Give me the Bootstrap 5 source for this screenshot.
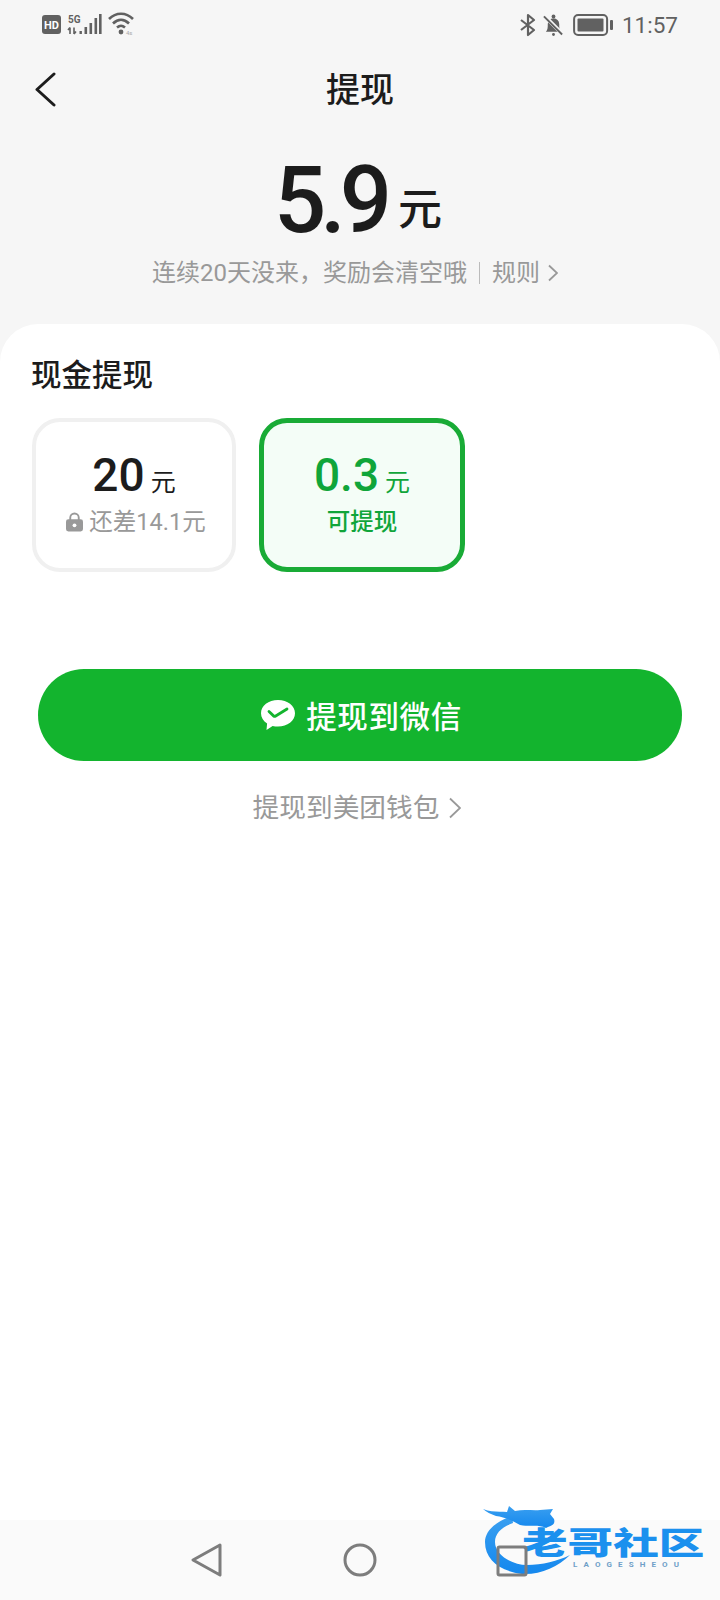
<!DOCTYPE html>
<html lang="zh-CN">
<head>
<meta charset="utf-8">
<title>提现</title>
<link href="https://cdn.jsdelivr.net/npm/bootstrap@5.3.0/dist/css/bootstrap.min.css" rel="stylesheet">
<style>
html,body{height:1600px;overflow:hidden;}
body{background:#f6f6f6;font-family:"Roboto","Noto Sans CJK SC",sans-serif;color:#1c1c1c;width:720px;position:relative;}
.screen{height:1600px;}
.statusbar{height:58px;padding:12px 42px 0 41px;color:#616161;}
.clock{font-size:22.5px;line-height:26px;font-family:"Roboto",sans-serif;margin-left:8px;}
.ic-bell{margin-left:6px;}
.ic-batt{margin-left:9px;}
.ic-wifi{margin-left:5px;}
.topbar{height:64px;position:relative;}
.topbar h1{font-size:34px;font-weight:500;margin:0;line-height:64px;width:100%;text-align:center;}
.backbtn{position:absolute;left:34px;top:14px;}
.balance{height:202px;padding-top:31px;}
.amount-line{line-height:96px;height:96px;padding-right:4px;}
.amount-big{font-size:92px;font-weight:500;letter-spacing:-6px;font-family:"Roboto",sans-serif;}
.amount-unit{font-size:44px;margin-left:12px;font-weight:500;transform:translateY(-7px);}
.rule-line{font-size:24px;color:#999;line-height:32px;margin-top:8px;padding-right:10px;}
.rule-sep{width:1px;height:22px;background:#bbb;margin:0 12px;}
.sheet{background:#fff;border-radius:38px 38px 0 0;padding:29px 32px 0 32px;}
.sheet-title{font-size:30.5px;font-weight:500;line-height:46px;margin:0 0 19px -1px;}
.tier{height:154px;border-radius:28px;padding-bottom:5px;}
.tier-off{border:4px solid #f0f0f0;background:#fff;width:204px;}
.tier-on{border:5px solid #19ab36;background:#f4fdf7;color:#10a53a;margin-left:23px;width:206px;}
.tier-val{font-size:46px;line-height:54px;font-weight:500;}
.tier-unit{font-size:25px;margin-left:6px;font-weight:400;}
.tier-note{font-size:23.5px;line-height:32px;color:#999;margin-top:4px;}
.tier-off .tier-note{padding-left:4px;}
.tier-on .tier-note{color:#10a53a;font-size:23.5px;font-weight:500;}
.lock-ic{margin-right:6px;}
.wx-btn{background:#13b42e;color:#fff;border:0;border-radius:46px;width:644px;height:92px;margin:97px 0 0 6px;padding-left:14px;font-size:30.5px;font-weight:500;letter-spacing:.6px;}
.wx-btn:hover{background:#13b42e;color:#fff;}
.wx-btn span{padding-top:5px;}
.wx-ic{margin-right:2px;}
.mt-link{font-size:26.7px;color:#999;line-height:36px;margin-top:29px;padding-right:6px;}
.chev-link{margin-left:10px;}
.navbar-bottom{position:absolute;left:0;right:0;bottom:0;height:80px;background:#fafafa;}
.nav-item-icon{position:absolute;top:22px;}
.wm{position:absolute;left:482px;top:1505px;width:225px;height:85px;}
.wm-text{position:absolute;left:40px;top:20px;font-size:31px;line-height:32px;font-weight:900;white-space:nowrap;font-family:"Noto Sans CJK SC",sans-serif;transform:scaleX(1.47);transform-origin:left center;color:#1b90ee;}
.wm-sub{position:absolute;left:91px;top:55px;font-size:8px;line-height:10px;font-weight:700;letter-spacing:6.1px;color:#6f9fc8;white-space:nowrap;}
.wm-logo{position:absolute;left:0;top:0;}
.wm-square{position:absolute;left:14px;top:40px;}
</style>
</head>
<body>
<div class="screen d-flex flex-column">
  <div class="statusbar d-flex justify-content-between align-items-start">
    <div class="d-flex align-items-center">
      <svg width="62" height="24" viewBox="0 0 62 24">
        <rect x="1" y="3" width="19" height="19" rx="3" fill="#616161"/>
        <text x="10.5" y="17" font-size="11" font-weight="700" fill="#fff" text-anchor="middle" font-family="Roboto">HD</text>
        <text x="27" y="11" font-size="10" font-weight="700" fill="#616161" font-family="Roboto">5G</text>
        <path d="M29 15.500v6.500M27 18l2-2.500M33 15.500v6.500M35 19.500l-2 2.500" stroke="#616161" stroke-width="1.600" fill="none"/>
        <g fill="#616161"><rect x="38.500" y="19" width="2.400" height="3"/><rect x="43.500" y="15" width="2.600" height="7"/><rect x="48.500" y="11" width="2.600" height="11"/><rect x="53.500" y="6" width="2.600" height="16"/><rect x="58" y="2" width="2.600" height="20"/></g>
      </svg>
      <svg class="ic-wifi" width="28" height="24" viewBox="0 0 28 24">
        <path d="M1 7C8 0 18 0 25 7M5 11.500c5-5 11-5 16 0M9 15.500c3-2.500 5-2.500 8 0" stroke="#616161" stroke-width="2.600" fill="none"/>
        <circle cx="13" cy="20" r="2.400" fill="#616161"/>
        <text x="18" y="23" font-size="6" fill="#aaa" font-family="Roboto">4s</text>
      </svg>
    </div>
    <div class="d-flex align-items-center">
      <svg width="18" height="24" viewBox="0 0 18 24"><path d="M2 7l13 10-6 5V2l6 5L2 17" stroke="#616161" stroke-width="2.200" fill="none" stroke-linejoin="round"/></svg>
      <svg class="ic-bell" width="21" height="24" viewBox="0 0 22 24"><path d="M3 19c2-2 2-4 2-8a6 6 0 0 1 12 0c0 4 0 6 2 8z" fill="#616161"/><circle cx="11" cy="3" r="2" fill="#616161"/><circle cx="11" cy="22" r="1.500" fill="#616161"/><path d="M1 2l20 20" stroke="#f6f6f6" stroke-width="4"/><path d="M1 3l19 19" stroke="#616161" stroke-width="2"/></svg>
      <svg class="ic-batt" width="41" height="22" viewBox="0 0 41 22"><rect x="1.100" y="1.100" width="33" height="19.800" rx="4" fill="none" stroke="#616161" stroke-width="2"/><rect x="4.500" y="4.500" width="26" height="13" rx="1" fill="#616161"/><rect x="37" y="6" width="3" height="10" rx="1" fill="#616161"/></svg>
      <span class="clock">11:57</span>
    </div>
  </div>
  <div class="topbar">
    <svg class="backbtn" width="22" height="36" viewBox="0 0 22 36"><path d="M20 2L3 17.500 20 33" stroke="#1c1c1c" stroke-width="3" fill="none" stroke-linecap="round" stroke-linejoin="round"/></svg>
    <h1>提现</h1>
  </div>
  <div class="balance text-center">
    <div class="amount-line d-flex justify-content-center align-items-baseline"><span class="amount-big">5.9</span><span class="amount-unit">元</span></div>
    <div class="rule-line d-flex justify-content-center align-items-center">
      <span>连续20天没来，奖励会清空哦</span><i class="rule-sep d-block"></i><span>规则</span>
      <svg class="ms-2" width="10" height="18" viewBox="0 0 10 18"><path d="M1 1.500L9 9l-8 7.500" stroke="#999" stroke-width="1.800" fill="none"/></svg>
    </div>
  </div>
  <div class="sheet flex-grow-1">
    <h2 class="sheet-title">现金提现</h2>
    <div class="d-flex">
      <div class="tier tier-off d-flex flex-column align-items-center justify-content-center">
        <div class="d-flex align-items-baseline"><span class="tier-val">20</span><span class="tier-unit">元</span></div>
        <div class="tier-note d-flex align-items-center">
          <svg class="lock-ic" width="17" height="20" viewBox="0 0 18 20"><path d="M4.500 8V5.500a4.500 4.500 0 0 1 9 0V8" stroke="#999" stroke-width="2" fill="none"/><rect y="7" width="18" height="13" rx="2.500" fill="#999"/><circle cx="9" cy="13.500" r="2" fill="#fff"/></svg>
          <span>还差14.1元</span>
        </div>
      </div>
      <div class="tier tier-on d-flex flex-column align-items-center justify-content-center">
        <div class="d-flex align-items-baseline"><span class="tier-val">0.3</span><span class="tier-unit">元</span></div>
        <div class="tier-note">可提现</div>
      </div>
    </div>
    <button type="button" class="btn wx-btn d-flex align-items-center justify-content-center gap-2">
      <svg class="wx-ic" width="36" height="32" viewBox="0 0 36 32"><path d="M18 1c9.500 0 17 5.900 17 13.300S27.500 27.600 18 27.600c-1.900 0-3.700-.2-5.400-.7L6.500 31l.6-6.500C3.300 22 1 18.400 1 14.300 1 6.900 8.500 1 18 1z" fill="#fff"/><path d="M9 12.500l4.800 4.600c.5.400 1 .4 1.500.1L27 10" stroke="#13b42e" stroke-width="2.800" fill="none" stroke-linecap="round"/></svg>
      <span>提现到微信</span>
    </button>
    <div class="mt-link d-flex justify-content-center align-items-center">
      <span>提现到美团钱包</span>
      <svg class="chev-link" width="12" height="22" viewBox="0 0 12 22"><path d="M1 1.500L11 11 1 20.500" stroke="#999" stroke-width="1.800" fill="none"/></svg>
    </div>
  </div>
</div>
<div class="navbar-bottom">
  <svg class="nav-item-icon" style="left:190px" width="34" height="36" viewBox="0 0 34 36"><path d="M30 3L3 18l27 15z" fill="none" stroke="#7d7d7d" stroke-width="3" stroke-linejoin="round"/></svg>
  <svg class="nav-item-icon" style="left:342px" width="36" height="36" viewBox="0 0 36 36"><circle cx="18" cy="18" r="15" fill="none" stroke="#7d7d7d" stroke-width="3"/></svg>
</div>
<div class="wm">
  <svg class="wm-logo" width="225" height="85" viewBox="0 0 225 85">
    <defs><linearGradient id="wg" x1="0" y1="0" x2="0" y2="1"><stop offset="0" stop-color="#3a9ff0"/><stop offset="1" stop-color="#1488ee"/></linearGradient></defs>
    <path d="M30 11C12 17 3 27 3 37C3 55 18 66 40 69C58 70 76 62 88 50C76 56 60 60 45 60C30 60 13 50 13 37C13 28 20 22 31 18Z" fill="url(#wg)"/>
    <path d="M1 4C10 8 18 6 25 7L27 1L33 6C42 4 52 6 58 5L71 4L68 9L72 14C74 20 68 21 64 23C56 19 50 22 38 20C30 15 22 12 14 11C9 9 4 7 1 4Z" fill="url(#wg)"/>
  </svg>
  <span class="wm-text">老哥社区</span>
  <span class="wm-sub">LAOGESHEOU</span>
  <svg class="wm-square" width="32" height="32" viewBox="0 0 32 32"><rect x="2" y="2" width="28" height="28" rx="1.500" fill="none" stroke="#7d7d7d" stroke-width="3"/></svg>
</div>
</body>
</html>
